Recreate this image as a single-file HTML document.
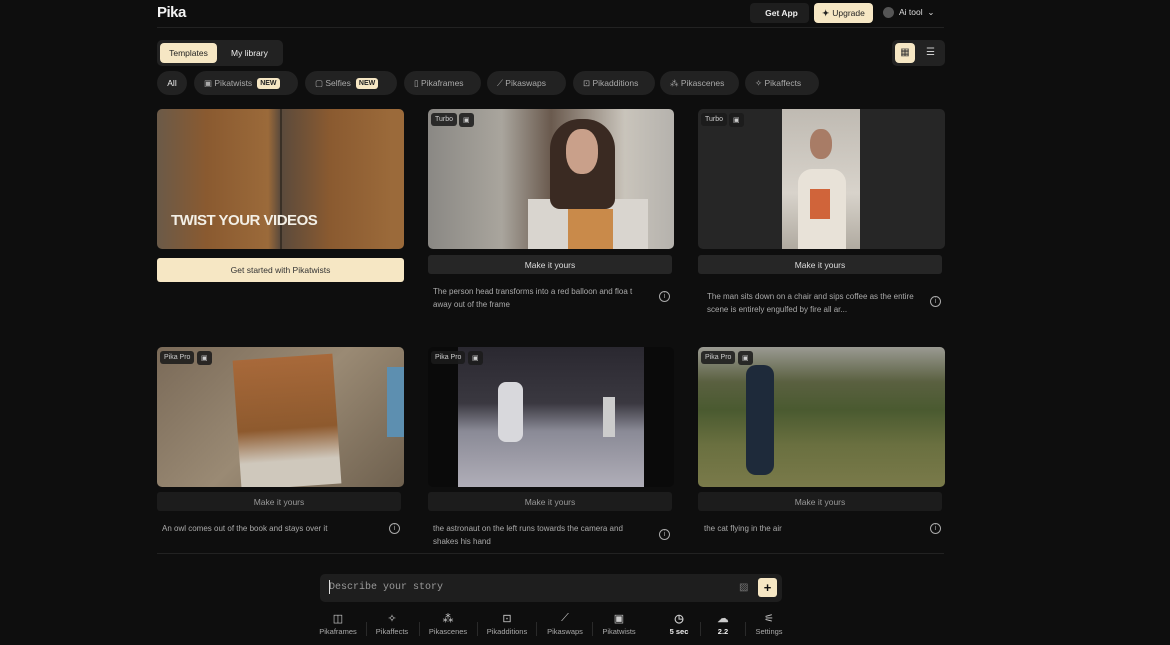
<!DOCTYPE html>
<html><head><meta charset="utf-8"><style>
*{margin:0;padding:0;box-sizing:border-box}
body{width:1170px;height:645px;background:#0e0e0e;font-family:"Liberation Sans",sans-serif;color:#ddd;position:relative;overflow:hidden;font-size:9px}
.a{position:absolute}
.chip{position:absolute;top:71px;height:24px;border-radius:12px;background:#222;color:#aaa;font-size:8.5px;display:flex;align-items:center;padding:0 10px;gap:5px}
.new{background:#f6e7c4;color:#222;font-size:7px;font-weight:bold;padding:2px 3px;border-radius:3px}
.img{position:absolute;border-radius:5px;overflow:hidden}
.btn{position:absolute;height:19px;background:#262626;border-radius:3px;color:#ddd;font-size:8.5px;display:flex;align-items:center;justify-content:center}
.btn2{background:#1c1c1c;color:#999}
.desc{position:absolute;font-size:8px;color:#aaa;line-height:13px;width:215px}
.info{position:absolute;width:11px;height:11px;border:1px solid #aaa;border-radius:50%;font-size:7px;color:#aaa;text-align:center;line-height:9px}
.tag{position:absolute;background:#1b1b1bdd;color:#ccc;font-size:7px;padding:3px 4px;border-radius:3px}
.nav{position:absolute;top:612px;font-size:7.5px;color:#aaa;text-align:center;width:60px}
.nav i{display:block;font-style:normal;font-size:11px;color:#ccc;height:15px}
.sep{position:absolute;top:622px;width:1px;height:14px;background:#2a2a2a}
</style></head><body>
<div class="a" style="left:157px;top:4px;font-size:15px;color:#f3f3f3;font-weight:bold;letter-spacing:-0.5px">Pika</div>
<div class="a" style="left:157px;top:27px;width:787px;height:1px;background:#222"></div>
<div class="a" style="left:750px;top:3px;width:59px;height:20px;background:#1e1e1e;border-radius:4px;font-size:8.5px;font-weight:bold;color:#eee;display:flex;align-items:center;justify-content:center;gap:4px"><span style="font-size:10px"></span>Get App</div>
<div class="a" style="left:814px;top:3px;width:59px;height:20px;background:#f6e7c4;border-radius:4px;font-size:8.5px;color:#222;display:flex;align-items:center;justify-content:center;gap:3px"><b>✦</b>Upgrade</div>
<div class="a" style="left:883px;top:7px;width:11px;height:11px;border-radius:50%;background:#555"></div>
<div class="a" style="left:899px;top:7px;font-size:8.5px;color:#ddd">Ai tool &nbsp;⌄</div>

<div class="a" style="left:157px;top:40px;width:126px;height:26px;background:#222;border-radius:5px"></div>
<div class="a" style="left:160px;top:43px;width:57px;height:20px;background:#f6e7c4;border-radius:4px;color:#222;font-size:8.5px;display:flex;align-items:center;justify-content:center">Templates</div>
<div class="a" style="left:231px;top:48px;font-size:8.5px;color:#eee">My library</div>
<div class="a" style="left:892px;top:40px;width:53px;height:26px;background:#222;border-radius:5px"></div>
<div class="a" style="left:895px;top:43px;width:20px;height:20px;background:#f6e7c4;border-radius:4px;color:#333;font-size:10px;text-align:center;line-height:20px">▦</div>
<div class="a" style="left:926px;top:47px;color:#ccc;font-size:10px">☰</div>

<div class="chip" style="left:157px;width:30px;justify-content:center;color:#eee">All</div>
<div class="chip" style="left:194px;width:104px">▣ Pikatwists <span class="new">NEW</span></div>
<div class="chip" style="left:305px;width:92px">▢ Selfies <span class="new">NEW</span></div>
<div class="chip" style="left:404px;width:77px">▯ Pikaframes</div>
<div class="chip" style="left:487px;width:79px">⟋ Pikaswaps</div>
<div class="chip" style="left:573px;width:82px">⊡ Pikadditions</div>
<div class="chip" style="left:660px;width:79px">⁂ Pikascenes</div>
<div class="chip" style="left:745px;width:74px">✧ Pikaffects</div>

<div class="img" style="left:157px;top:109px;width:247px;height:140px;background:linear-gradient(90deg,#6b5a48 0%,#8a5a30 20%,#9b6a3a 45%,#5a4a3c 50%,#8a5a30 70%,#9b6a3a 95%)">
<div class="a" style="left:123px;top:0;width:2px;height:140px;background:#3a3026"></div>
<div class="a" style="left:14px;top:103px;font-size:15px;font-weight:900;color:#f3efe6;letter-spacing:-0.5px">TWIST YOUR VIDEOS</div></div>
<div class="a" style="left:157px;top:258px;width:247px;height:24px;background:#f6e7c4;border-radius:3px;color:#333;font-size:8.5px;display:flex;align-items:center;justify-content:center">Get started with Pikatwists</div>

<div class="img" style="left:428px;top:109px;width:246px;height:140px;background:linear-gradient(90deg,#8a8884 0%,#a9a59d 30%,#6a5a4e 50%,#c9c4bb 80%,#b5b2ad 100%)">
<div class="a" style="left:100px;top:90px;width:120px;height:50px;background:#d9d5cf"></div>
<div class="a" style="left:140px;top:100px;width:45px;height:40px;background:#c98a4a"></div>
<div class="a" style="left:122px;top:10px;width:65px;height:90px;background:#3a2a22;border-radius:30px 30px 10px 10px"></div>
<div class="a" style="left:138px;top:20px;width:32px;height:45px;background:#c9a08a;border-radius:45%"></div>
</div>
<div class="tag" style="left:431px;top:113px">Turbo</div><div class="tag" style="left:459px;top:113px">▣</div>
<div class="btn" style="left:428px;top:255px;width:244px">Make it yours</div>
<div class="desc" style="left:433px;top:285px">The person head transforms into a red balloon and floa t away out of the frame</div>
<div class="info" style="left:659px;top:291px">i</div>

<div class="img" style="left:698px;top:109px;width:247px;height:140px;background:#262626">
<div class="a" style="left:84px;top:0;width:78px;height:140px;background:linear-gradient(180deg,#bfbab2,#d8d3cb 60%,#b0aaa0)"></div>
<div class="a" style="left:112px;top:20px;width:22px;height:30px;background:#a87c66;border-radius:45%"></div>
<div class="a" style="left:100px;top:60px;width:48px;height:80px;background:#e8e2d8;border-radius:14px 14px 0 0"></div>
<div class="a" style="left:112px;top:80px;width:20px;height:30px;background:#d0643a"></div></div>
<div class="tag" style="left:701px;top:113px">Turbo</div><div class="tag" style="left:729px;top:113px">▣</div>
<div class="btn" style="left:698px;top:255px;width:244px">Make it yours</div>
<div class="desc" style="left:707px;top:290px">The man sits down on a chair and sips coffee as the entire scene is entirely engulfed by fire all ar...</div>
<div class="info" style="left:930px;top:296px">i</div>

<div class="img" style="left:157px;top:347px;width:247px;height:140px;background:linear-gradient(135deg,#7a6a58,#9a8a74 50%,#6e604e)">
<div class="a" style="left:80px;top:10px;width:100px;height:130px;background:linear-gradient(180deg,#a8693a,#8e5a2e 55%,#cfc8bc 80%);transform:rotate(-4deg)"></div>
<div class="a" style="left:230px;top:20px;width:17px;height:70px;background:#5d8fb0"></div></div>
<div class="tag" style="left:160px;top:351px">Pika Pro</div><div class="tag" style="left:197px;top:351px">▣</div>
<div class="btn btn2" style="left:157px;top:492px;width:244px">Make it yours</div>
<div class="desc" style="left:162px;top:522px">An owl comes out of the book and stays over it</div>
<div class="info" style="left:389px;top:523px">i</div>

<div class="img" style="left:428px;top:347px;width:246px;height:140px;background:#0a0a0a">
<div class="a" style="left:30px;top:0;width:186px;height:140px;background:linear-gradient(180deg,#2a2830 0%,#3a3840 40%,#8a8a96 60%,#b0aeb8 100%)"></div>
<div class="a" style="left:70px;top:35px;width:25px;height:60px;background:#d8d8dc;border-radius:8px"></div>
<div class="a" style="left:175px;top:50px;width:12px;height:40px;background:#ccc"></div></div>
<div class="tag" style="left:431px;top:351px">Pika Pro</div><div class="tag" style="left:468px;top:351px">▣</div>
<div class="btn btn2" style="left:428px;top:492px;width:244px">Make it yours</div>
<div class="desc" style="left:433px;top:522px">the astronaut on the left runs towards the camera and shakes his hand</div>
<div class="info" style="left:659px;top:529px">i</div>

<div class="img" style="left:698px;top:347px;width:247px;height:140px;background:linear-gradient(180deg,#9a9a92 0%,#5a6040 25%,#4a5a30 45%,#6a7040 70%,#7a7a4a 100%)">
<div class="a" style="left:48px;top:18px;width:28px;height:110px;background:#1e2a3a;border-radius:10px"></div></div>
<div class="tag" style="left:701px;top:351px">Pika Pro</div><div class="tag" style="left:738px;top:351px">▣</div>
<div class="btn btn2" style="left:698px;top:492px;width:244px">Make it yours</div>
<div class="desc" style="left:704px;top:522px">the cat flying in the air</div>
<div class="info" style="left:930px;top:523px">i</div>

<div class="a" style="left:157px;top:553px;width:787px;height:1px;background:#222"></div>
<div class="a" style="left:320px;top:574px;width:462px;height:28px;background:#1e1e1e;border-radius:5px"></div>
<div class="a" style="left:329px;top:582px;font-family:'Liberation Mono',monospace;font-size:10px;color:#999">Describe your story</div>
<div class="a" style="left:329px;top:580px;width:1px;height:14px;background:#ddd"></div>
<div class="a" style="left:739px;top:582px;color:#777;font-size:10px">▨</div>
<div class="a" style="left:758px;top:578px;width:19px;height:19px;background:#f6e7c4;border-radius:3px;color:#111;font-size:13px;text-align:center;line-height:19px;font-weight:bold">+</div>

<div class="nav" style="left:308px"><i>◫</i>Pikaframes</div>
<div class="sep" style="left:366px"></div>
<div class="nav" style="left:362px"><i>✧</i>Pikaffects</div>
<div class="sep" style="left:419px"></div>
<div class="nav" style="left:418px"><i>⁂</i>Pikascenes</div>
<div class="sep" style="left:477px"></div>
<div class="nav" style="left:477px"><i>⊡</i>Pikadditions</div>
<div class="sep" style="left:536px"></div>
<div class="nav" style="left:535px"><i>⟋</i>Pikaswaps</div>
<div class="sep" style="left:592px"></div>
<div class="nav" style="left:589px"><i>▣</i>Pikatwists</div>
<div class="nav" style="left:649px;color:#eee;font-weight:bold"><i>◷</i>5 sec</div>
<div class="sep" style="left:700px"></div>
<div class="nav" style="left:693px;color:#eee;font-weight:bold"><i>☁</i>2.2</div>
<div class="sep" style="left:745px"></div>
<div class="nav" style="left:739px"><i>⚟</i>Settings</div>
</body></html>
